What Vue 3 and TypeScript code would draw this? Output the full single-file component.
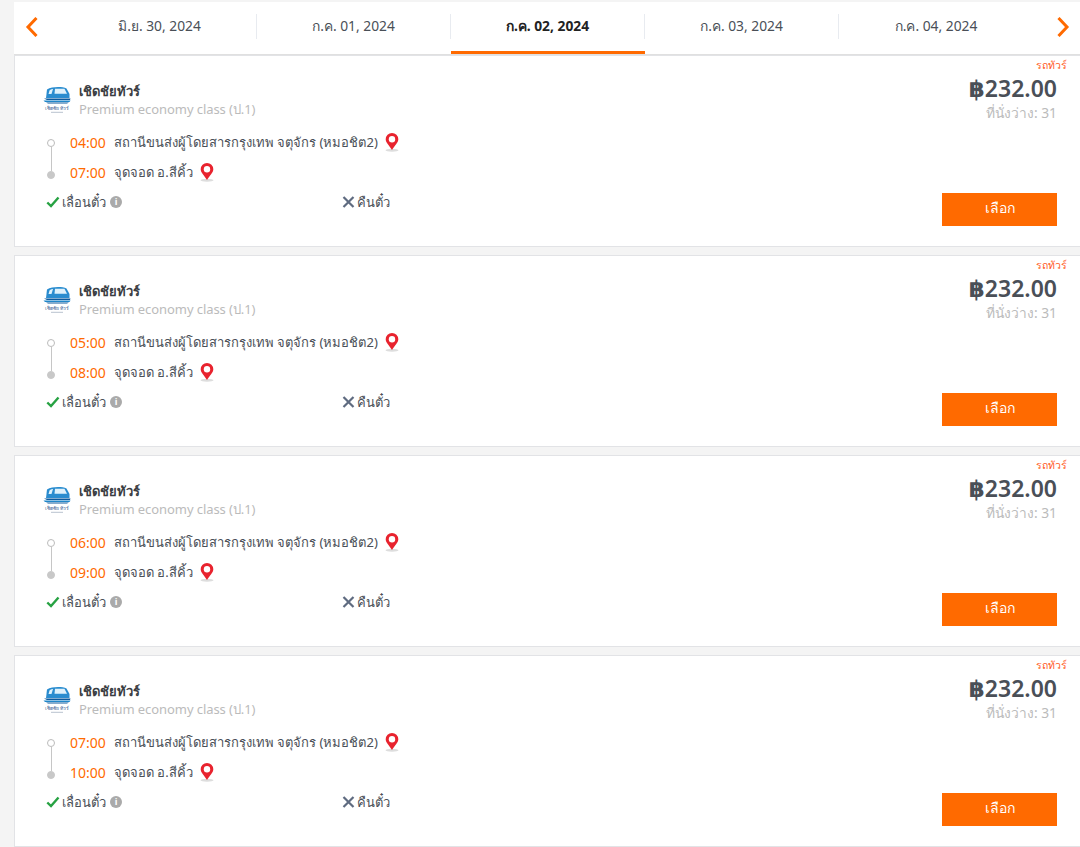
<script setup lang="ts">
const dates = [
  { label: 'มิ.ย. 30, 2024', active: false },
  { label: 'ก.ค. 01, 2024', active: false },
  { label: 'ก.ค. 02, 2024', active: true },
  { label: 'ก.ค. 03, 2024', active: false },
  { label: 'ก.ค. 04, 2024', active: false },
]
const trips = [
  { dep: '04:00', arr: '07:00' },
  { dep: '05:00', arr: '08:00' },
  { dep: '06:00', arr: '09:00' },
  { dep: '07:00', arr: '10:00' },
]
</script>

<template>
  <div class="page">
    <div class="datebar">
      <svg class="arrow" width="14" height="20" viewBox="0 0 14 20"><path d="M11.5 1 3 10l8.500 9" fill="none" stroke="#ff6a00" stroke-width="3" /></svg>
      <div class="dates">
        <div v-for="d in dates" :key="d.label" class="date" :class="{ active: d.active }">{{ d.label }}</div>
      </div>
      <svg class="arrow" width="14" height="20" viewBox="0 0 14 20"><path d="M2.5 1 11 10l-8.500 9" fill="none" stroke="#ff6a00" stroke-width="3" /></svg>
    </div>
    <div class="list">
      <article v-for="t in trips" :key="t.dep" class="card">
        <div class="kind">รถทัวร์</div>
        <div class="main">
          <div class="left">
            <div class="company">
              <svg class="logo" width="28" height="30" viewBox="0 0 28 30">
                <path d="M4 5.500C9 2.500 19 2.500 23.500 4.500L26.500 10V14H3z" fill="#2a8ccf" />
                <path d="M6.500 6.500C7.500 5.500 8.500 5 10 5L8.500 10H5.500zM12 4.800h9.500l2.500 5H11.500z" fill="#dff1fb" />
                <path d="M1 14.500h26.500l-.5 1.500H4z" fill="#0d5a9e" />
                <path d="M0.500 16.500h27l-1 1.500H2z" fill="#1f86c9" />
                <path d="M3 18.500h23l-2 1H5z" fill="#0d5a9e" />
                <text x="14" y="26" text-anchor="middle" class="logo-text">เชิดชัย ทัวร์</text>
                <rect x="8" y="27.800" width="12" height="1" fill="#b8c2cf" />
              </svg>
              <div>
                <div class="name">เชิดชัยทัวร์</div>
                <div class="cls">Premium economy class (ป.1)</div>
              </div>
            </div>
            <div class="route">
              <div class="line"><i class="dot" /><i class="bar" /><i class="dot full" /></div>
              <div class="stops">
                <div class="stop">
                  <span class="time">{{ t.dep }}</span>
                  <span>สถานีขนส่งผู้โดยสารกรุงเทพ จตุจักร (หมอชิต2)</span>
                  <svg class="pin" width="14" height="19" viewBox="0 0 14 19"><ellipse cx="7" cy="17.200" rx="6.500" ry="1.500" fill="#ddd" /><path d="M7 17C4 12 .7 9.800 .7 6.300a6.300 6.300 0 0 1 12.600 0C13.300 9.800 10 12 7 17z" fill="#e8232e" /><circle cx="7" cy="6.300" r="3.200" fill="#fff" /></svg>
                </div>
                <div class="stop">
                  <span class="time">{{ t.arr }}</span>
                  <span>จุดจอด อ.สีคิ้ว</span>
                  <svg class="pin" width="14" height="19" viewBox="0 0 14 19"><ellipse cx="7" cy="17.200" rx="6.500" ry="1.500" fill="#ddd" /><path d="M7 17C4 12 .7 9.800 .7 6.300a6.300 6.300 0 0 1 12.600 0C13.300 9.800 10 12 7 17z" fill="#e8232e" /><circle cx="7" cy="6.300" r="3.200" fill="#fff" /></svg>
                </div>
              </div>
            </div>
            <div class="policies">
              <div class="policy first">
                <svg width="14" height="12" viewBox="0 0 14 12"><path d="M1.300 6.500 5 10l7.500-8.500" fill="none" stroke="#27a243" stroke-width="2.400" /></svg>
                <span>เลื่อนตั๋ว</span>
                <span class="info">i</span>
              </div>
              <div class="policy">
                <svg width="13" height="12" viewBox="0 0 13 12"><path d="M1.500 1 11.500 11M11.500 1l-10 10" fill="none" stroke="#5f6b80" stroke-width="2.200" /></svg>
                <span>คืนตั๋ว</span>
              </div>
            </div>
          </div>
          <div class="right">
            <div class="price">฿232.00</div>
            <div class="seats">ที่นั่งว่าง: 31</div>
            <button class="pick"><span>เลือก</span></button>
          </div>
        </div>
      </article>
    </div>
  </div>
</template>

<style>
html, body { margin: 0; background: #f4f4f4; }
</style>

<style scoped>
.page {
  padding: 2px 0 0 14px;
  font-family: "Noto Sans", "Open Sans", "DejaVu Sans", sans-serif;
  font-size: 13px;
  color: #4a4f57;
  height: 845px;
  overflow: hidden;
}
.datebar {
  height: 52px;
  background: #fff;
  display: flex;
  align-items: flex-start;
  padding: 0 10px 0 11px;
  border-bottom: 1px solid #e0e0e0;
}
.arrow { margin-top: 15px; flex: none; }
.dates { flex: 1; display: flex; padding-left: 24px; }
.date {
  box-sizing: border-box;
  width: 194px;
  height: 25px;
  margin-top: 12px;
  font-size: 13.8px;
  line-height: 23px;
  text-align: center;
  border-right: 1px solid #e8ebf0;
  position: relative;
}
.date:last-child { border-right: none; }
.date.active { font-weight: 700; color: #222; }
.date.active::after {
  content: "";
  position: absolute;
  left: 0;
  right: -1px;
  top: 37px;
  height: 3px;
  background: #ff6a00;
}
.list { display: flex; flex-direction: column; gap: 8px; }
.card {
  height: 190px;
  background: #fff;
  border: 1px solid #e2e3e6;
  border-right: none;
  position: relative;
}
.kind {
  position: absolute;
  top: 1px;
  right: 13px;
  color: #ff5a1f;
  font-size: 10.5px;
  line-height: 16px;
}
.main { display: flex; justify-content: space-between; height: 100%; padding: 25px 23px 20px 28px; box-sizing: border-box; }
.company { display: flex; gap: 8px; align-items: center; }
.logo-text { font-size: 5px; font-weight: 400; fill: #3c5f94; }
.name { font-weight: 600; font-size: 13px; line-height: 20px; color: #3a3d42; }
.cls { color: #bbb; line-height: 16px; font-size: 13px; letter-spacing: -0.07px; }
.route { display: flex; margin-top: 10px; }
.line { width: 27px; padding: 12px 0 0 4px; box-sizing: border-box; display: flex; flex-direction: column; align-items: flex-start; }
.dot { box-sizing: border-box; width: 8px; height: 8px; border-radius: 50%; border: 1px solid #bbb; background: #fff; flex: none; }
.dot.full { background: #c8c8c8; border-color: #c8c8c8; }
.bar { width: 1px; height: 24px; background: #c6c6c6; margin-left: 3.500px; }
.stop { height: 30px; display: flex; align-items: center; gap: 8px; }
.time { color: #ff6a00; font-size: 14px; }
.pin { margin-left: -1px; margin-top: 0; }
.policies { display: flex; margin-top: 3px; }
.policy { display: flex; align-items: center; gap: 2px; height: 24px; }
.policy.first { width: 296px; margin-left: 3px; }
.info {
  width: 12px; height: 12px; border-radius: 50%;
  background: #aaa; color: #fff; font-size: 9px; font-weight: 700;
  line-height: 12px; text-align: center; margin-left: 2px;
}
.right { display: flex; flex-direction: column; align-items: flex-end; }
.price { font-size: 23px; font-weight: 600; line-height: 28px; margin-top: -7px; color: #4a4f57; }
.seats { color: #bbb; line-height: 22px; font-size: 13.800px; }
.pick {
  margin-top: auto;
  width: 115px;
  height: 33px;
  background: #ff6a00;
  color: #fff;
  border: none;
  font: inherit;
  font-size: 14px;
  padding: 0 0 3px;
}
</style>
